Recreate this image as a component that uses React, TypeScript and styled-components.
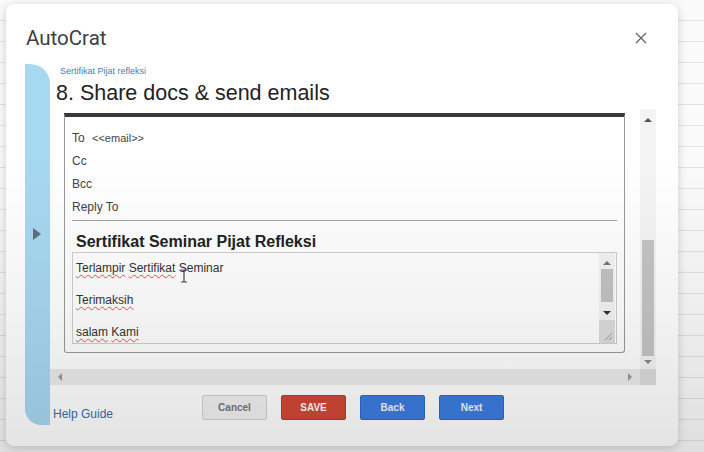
import styled, { createGlobalStyle } from "styled-components";

const GlobalStyle = createGlobalStyle`
  html, body {
    margin: 0;
    padding: 0;
  }
  body {
    width: 704px;
    height: 452px;
    overflow: hidden;
    font-family: "Liberation Sans", Arial, sans-serif;
    background-color: #fafafa;
    background-image:
      repeating-linear-gradient(to bottom, transparent 0 20px, #e3e3e3 20px 21px);
  }
`;

const Spellcheck = ({ children }: { children: string }) => <Misspelled>{children}</Misspelled>;

const App = () => {
  return (
    <>
      <GlobalStyle />
      <Page>
        <Dialog>
          <Header>
            <Title>AutoCrat</Title>
            <CloseButton aria-label="close">
              <svg width="12" height="12" viewBox="0 0 12 12">
                <path d="M1 1 L11 11 M11 1 L1 11" stroke="#666" strokeWidth="1.4" />
              </svg>
            </CloseButton>
          </Header>
          <Body>
            <Sidebar>
              <SideArrow />
            </Sidebar>
            <Main>
              <Subtitle>Sertifikat Pijat refleksi</Subtitle>
              <Heading>8. Share docs &amp; send emails</Heading>
              <ScrollArea>
                <ScrollContent>
                  <EmailBox>
                    <Field>
                      To <FieldValue>&lt;&lt;email&gt;&gt;</FieldValue>
                    </Field>
                    <Field>Cc</Field>
                    <Field>Bcc</Field>
                    <Field>Reply To</Field>
                    <Divider />
                    <Subject>Sertifikat Seminar Pijat Refleksi</Subject>
                    <TextArea>
                      <TextBody>
                        <Line>
                          <Spellcheck>Terlampir</Spellcheck> <Spellcheck>Sertifikat</Spellcheck> Seminar
                        </Line>
                        <Line />
                        <Line>
                          <Spellcheck>Terimaksih</Spellcheck>
                        </Line>
                        <Line />
                        <Line>
                          <Spellcheck>salam</Spellcheck> <Spellcheck>Kami</Spellcheck>
                        </Line>
                      </TextBody>
                      <MiniScroll>
                        <MiniArrow $dir="up" />
                        <MiniThumb />
                        <MiniArrow $dir="down" />
                        <Resize>
                          <svg width="10" height="10" viewBox="0 0 10 10">
                            <path d="M2 9 L9 2 M6 9 L9 6" stroke="#999" strokeWidth="1" />
                          </svg>
                        </Resize>
                      </MiniScroll>
                      <Cursor>
                        <svg width="8" height="14" viewBox="0 0 8 14">
                          <path d="M1 1 H7 M4 1 V13 M1 13 H7" stroke="#444" strokeWidth="1.2" fill="none" />
                        </svg>
                      </Cursor>
                    </TextArea>
                  </EmailBox>
                </ScrollContent>
                <VScroll>
                  <Arrow $dir="up" />
                  <VTrack>
                    <VThumb />
                  </VTrack>
                  <Arrow $dir="down" />
                </VScroll>
                <HScroll>
                  <Arrow $dir="left" />
                  <Arrow $dir="right" />
                </HScroll>
                <Corner />
              </ScrollArea>
              <Footer>
                <HelpLink>Help Guide</HelpLink>
                <Buttons>
                  <Button $variant="cancel">Cancel</Button>
                  <Button $variant="save">SAVE</Button>
                  <Button $variant="blue">Back</Button>
                  <Button $variant="blue">Next</Button>
                </Buttons>
              </Footer>
            </Main>
          </Body>
        </Dialog>
        <Shade />
      </Page>
    </>
  );
};

export default App;

const Page = styled.div`
  position: relative;
  width: 704px;
  height: 452px;
  padding: 4px 0 0 6px;
  box-sizing: border-box;
`;

const Dialog = styled.div`
  width: 672px;
  height: 442px;
  background: #fff;
  border-radius: 8px;
  box-shadow: 0 2px 10px rgba(0, 0, 0, 0.18);
  padding: 0 22px 0 19px;
  box-sizing: border-box;
  display: flex;
  flex-direction: column;
`;

const Header = styled.div`
  height: 60px;
  padding-top: 22px;
  box-sizing: border-box;
  display: flex;
  justify-content: space-between;
  align-items: flex-start;
`;

const Title = styled.div`
  font-family: Roboto, "Open Sans", sans-serif;
  font-size: 20.5px;
  line-height: 24px;
  color: #3c4043;
  padding-left: 1px;
`;

const CloseButton = styled.div`
  width: 14px;
  height: 24px;
  display: flex;
  align-items: center;
  justify-content: center;
  margin-right: 8px;
`;

const Body = styled.div`
  display: flex;
  height: 361px;
`;

const Sidebar = styled.div`
  width: 25px;
  flex: none;
  background: #a7d8f1;
  border-radius: 0 20px 0 16px;
  display: flex;
  align-items: flex-start;
  padding-top: 164px;
  padding-left: 8px;
  box-sizing: border-box;
`;

const SideArrow = styled.div`
  width: 0;
  height: 0;
  border-top: 6px solid transparent;
  border-bottom: 6px solid transparent;
  border-left: 8px solid #5f6f7a;
`;

const Main = styled.div`
  flex: 1;
  display: flex;
  flex-direction: column;
`;

const Subtitle = styled.div`
  font-size: 9px;
  line-height: 11px;
  color: #3d7fc4;
  padding: 2px 0 0 10px;
`;

const Heading = styled.div`
  font-size: 21.5px;
  line-height: 26px;
  color: #222;
  padding: 3px 0 3px 6px;
`;

const ScrollArea = styled.div`
  width: 606px;
  height: 276px;
  display: grid;
  grid-template-columns: 590px 16px;
  grid-template-rows: 260px 16px;
`;

const ScrollContent = styled.div`
  padding: 4px 0 0 14px;
  overflow: hidden;
`;

const EmailBox = styled.div`
  width: 561px;
  height: 240px;
  box-sizing: border-box;
  border: 1px solid #9a9a9a;
  border-top: 4px solid #3a3a3a;
  border-radius: 0 0 3px 3px;
  padding: 10px 7px 0 7px;
  background: #fff;
`;

const Field = styled.div`
  font-size: 12px;
  line-height: 23px;
  color: #444;
`;

const FieldValue = styled.span`
  font-size: 11px;
  margin-left: 4px;
`;

const Divider = styled.div`
  height: 1px;
  background: #a0a0a0;
  margin-top: 1px;
`;

const Subject = styled.div`
  font-size: 16px;
  font-weight: bold;
  line-height: 20px;
  color: #222;
  padding: 11px 0 0 4px;
`;

const TextArea = styled.div`
  position: relative;
  height: 92px;
  border: 1px solid #cfcfcf;
  box-sizing: border-box;
  display: flex;
  background: #fff;
`;

const TextBody = styled.div`
  flex: 1;
  padding: 7px 0 0 3px;
  font-size: 12px;
  line-height: 16px;
  color: #333;
`;

const Line = styled.div`
  height: 16px;
`;

const Misspelled = styled.span`
  text-decoration: underline wavy #e05050;
  text-decoration-thickness: 1px;
  text-underline-offset: 2px;
`;

const MiniScroll = styled.div`
  width: 16px;
  margin-right: 1px;
  display: flex;
  flex-direction: column;
  align-items: center;
  background: #f3f3f3;
`;

const MiniArrow = styled.div<{ $dir: "up" | "down" }>`
  width: 0;
  height: 0;
  margin: ${(p) => (p.$dir === "up" ? "8px 0 4px" : "9px 0 5px")};
  border-left: 4px solid transparent;
  border-right: 4px solid transparent;
  ${(p) =>
    p.$dir === "up" ? "border-bottom: 4px solid #777;" : "border-top: 4px solid #333;"}
`;

const MiniThumb = styled.div`
  width: 12px;
  height: 33px;
  background: #c2c2c2;
`;

const Resize = styled.div`
  width: 16px;
  flex: 1;
  background: #dcdcdc;
  display: flex;
  align-items: flex-end;
  justify-content: flex-end;
  padding: 0 2px 2px 0;
  box-sizing: border-box;
`;

const Cursor = styled.div`
  position: absolute;
  left: 107px;
  top: 16px;
`;

const VScroll = styled.div`
  background: #f4f4f4;
  display: flex;
  flex-direction: column;
  align-items: center;
  padding-top: 3px;
`;

const VTrack = styled.div`
  flex: 1;
  width: 12px;
  display: flex;
  flex-direction: column;
  justify-content: flex-end;
`;

const VThumb = styled.div`
  height: 116px;
  background: #c4c4c4;
`;

const Arrow = styled.div<{ $dir: "up" | "down" | "left" | "right" }>`
  width: 0;
  height: 0;
  margin: 6px;
  ${(p) => {
    switch (p.$dir) {
      case "up":
        return "border-left: 4px solid transparent; border-right: 4px solid transparent; border-bottom: 4px solid #555;";
      case "down":
        return "margin: 4px 6px 5px; border-left: 4px solid transparent; border-right: 4px solid transparent; border-top: 4px solid #888;";
      case "left":
        return "border-top: 4px solid transparent; border-bottom: 4px solid transparent; border-right: 4px solid #999;";
      default:
        return "border-top: 4px solid transparent; border-bottom: 4px solid transparent; border-left: 4px solid #999;";
    }
  }}
`;

const HScroll = styled.div`
  background: #ebebeb;
  display: flex;
  align-items: center;
  justify-content: space-between;
  padding: 0 2px;
`;

const Corner = styled.div`
  background: #dcdcdc;
`;

const Footer = styled.div`
  flex: 1;
  display: flex;
  align-items: flex-start;
  padding-top: 10px;
`;

const HelpLink = styled.div`
  font-size: 12px;
  line-height: 16px;
  color: #3a6db0;
  padding: 11px 0 0 3px;
  width: 149px;
`;

const Buttons = styled.div`
  display: flex;
  gap: 14px;
`;

const buttonColors = {
  cancel: "background: #f1f1f1; color: #777; border: 1px solid #d2d2d2;",
  save: "background: #d14836; color: #fff; border: 1px solid #b83a2a;",
  blue: "background: #3b7de0; color: #f2f6ff; border: 1px solid #2f6bc6;",
};

const Button = styled.div<{ $variant: "cancel" | "save" | "blue" }>`
  width: 65px;
  height: 25px;
  box-sizing: border-box;
  border-radius: 2px;
  font-size: 10px;
  font-weight: bold;
  display: flex;
  align-items: center;
  justify-content: center;
  ${(p) => buttonColors[p.$variant]}
`;

const Shade = styled.div`
  position: absolute;
  inset: 0;
  pointer-events: none;
  background: linear-gradient(
    to bottom,
    rgba(0, 0, 0, 0) 0%,
    rgba(0, 0, 0, 0) 35%,
    rgba(0, 0, 0, 0.05) 70%,
    rgba(0, 0, 0, 0.11) 100%
  );
`;
